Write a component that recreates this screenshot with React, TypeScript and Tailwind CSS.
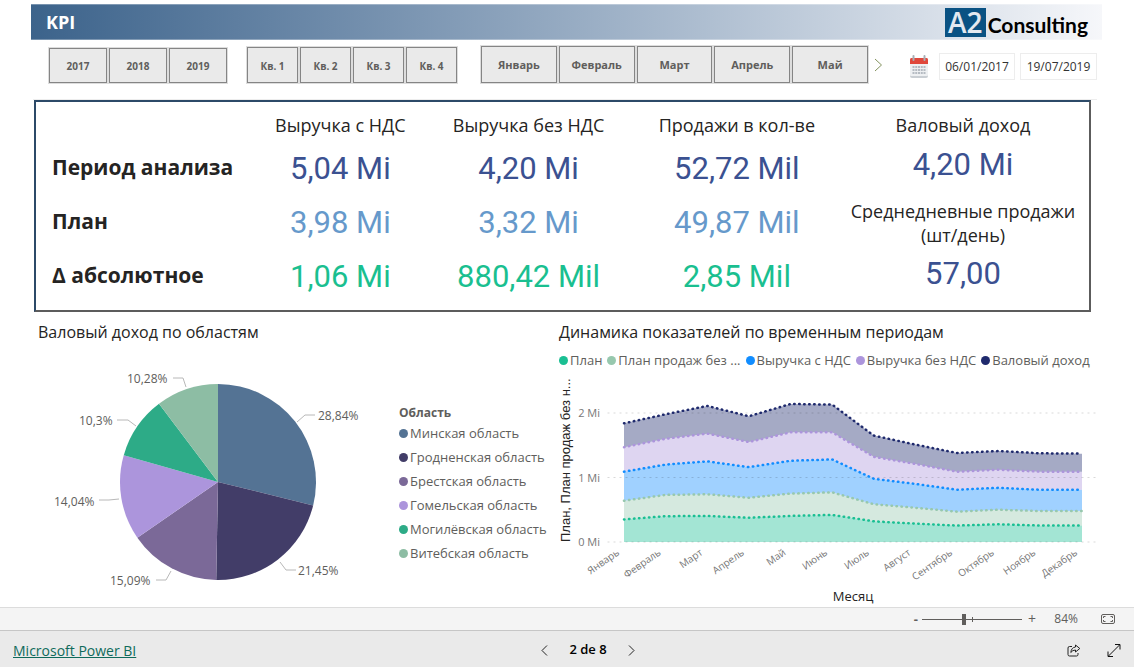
import { useState } from "react";

const years = ['2017', '2018', '2019'];
const quarters = ['Кв. 1', 'Кв. 2', 'Кв. 3', 'Кв. 4'];
const slicerMonths = ['Январь', 'Февраль', 'Март', 'Апрель', 'Май'];

const kpiRows = [
  { label: 'Период анализа', color: 'text-[#3b5191]', values: ['5,04 Mi', '4,20 Mi', '52,72 Mil'] },
  { label: 'План', color: 'text-[#6699cb]', values: ['3,98 Mi', '3,32 Mi', '49,87 Mil'] },
  { label: 'Δ абсолютное', color: 'text-[#1abf90]', values: ['1,06 Mi', '880,42 Mil', '2,85 Mil'] },
];

// line = leader line, x / y = start of the label
const regions = [
  { name: 'Минская область', value: 28.84, label: '28,84%', color: '#547394', line: '259,50 267,43 277,43', x: 280, y: 48 },
  { name: 'Гродненская область', value: 21.45, label: '21,45%', color: '#423d68', line: '242,190 248,198 258,198', x: 260, y: 203 },
  { name: 'Брестская область', value: 15.09, label: '15,09%', color: '#7b6998', line: '133,199 128,208 118,208', x: 72, y: 213 },
  { name: 'Гомельская область', value: 14.04, label: '14,04%', color: '#ac95dc', line: '81,127 71,128 61,128', x: 16, y: 134 },
  { name: 'Могилёвская область', value: 10.3, label: '10,3%', color: '#2dab87', line: '98,54 90,48 79,48', x: 41, y: 53 },
  { name: 'Витебская область', value: 10.28, label: '10,28%', color: '#8dbda4', line: '148,15 145,6 135,6', x: 89, y: 11 },
];

const months = ['Январь', 'Февраль', 'Март', 'Апрель', 'Май', 'Июнь', 'Июль', 'Август', 'Сентябрь', 'Октябрь', 'Ноябрь', 'Декабрь'];

// cumulative values in Mi, from the bottom layer to the top one
const series = [
  { name: 'План', color: '#1abf93', total: [0.35, 0.4, 0.405, 0.375, 0.405, 0.42, 0.32, 0.285, 0.255, 0.275, 0.255, 0.255] },
  { name: 'План продаж без ...', color: '#97c8ae', total: [0.64, 0.73, 0.74, 0.685, 0.75, 0.77, 0.585, 0.53, 0.47, 0.5, 0.48, 0.48] },
  { name: 'Выручка с НДС', color: '#118dff', total: [1.09, 1.2, 1.25, 1.16, 1.26, 1.28, 0.98, 0.9, 0.81, 0.84, 0.81, 0.81] },
  { name: 'Выручка без НДС', color: '#ac95dc', total: [1.47, 1.6, 1.68, 1.55, 1.7, 1.7, 1.32, 1.21, 1.09, 1.12, 1.09, 1.09] },
  { name: 'Валовый доход', color: '#1f2a6d', total: [1.84, 1.98, 2.11, 1.95, 2.14, 2.13, 1.65, 1.51, 1.38, 1.41, 1.375, 1.37] },
];

function Slicer({ items, className, buttonClass }: { items: string[]; className: string; buttonClass: string }) {
  const [active, setActive] = useState('');
  return (
    <div className={`flex gap-[2px] ${className}`}>
      {items.map((item) => (
        <button
          key={item}
          type="button"
          aria-pressed={active === item}
          onClick={() => setActive(item)}
          className={`border border-[#858585] bg-[#eaeaea] font-bold text-[#605e5c] outline outline-[#dddddd] ${buttonClass}`}
        >
          {item}
        </button>
      ))}
    </div>
  );
}

function Logo() {
  return (
    <div className="flex items-center gap-[2px]">
      <div className="flex h-[29px] w-[41px] items-center justify-center bg-[#0a5283] font-['Open_Sans'] text-[28px] leading-none font-semibold text-[#e3e9f0]">A2</div>
      <div className="pt-1 font-['Lato'] text-[21px] leading-none font-bold text-black">Consulting</div>
    </div>
  );
}

function CalendarIcon() {
  return (
    <svg width="20" height="24" viewBox="0 0 20 24" aria-hidden="true">
      <rect x="1" y="3" width="18" height="20" rx="2" fill="#c9ced3" />
      <rect x="1" y="3" width="18" height="18" rx="1" fill="#eef0f2" />
      <path d="M1 9V4.500Q1 3 2.500 3H17.500Q19 3 19 4.500V9Z" fill="#e0483c" />
      <path d="M4.500 1V5M15.500 1V5" stroke="#a9afb5" strokeWidth="2" strokeLinecap="round" />
      <path d="M3.500 12H16.500M3.500 15H16.500M3.500 18H16.500" stroke="#b5bbc2" strokeWidth="2" strokeDasharray="2 0.75" />
    </svg>
  );
}

function Header() {
  return (
    <header className="flex h-9 items-center justify-between border-y border-white/30 bg-linear-to-r from-[#3c638b] to-[#f6f7fa] pr-[14px] pl-[15px]">
      <h1 className="text-[18px] font-bold text-white">KPI</h1>
      <Logo />
    </header>
  );
}

function Filters() {
  return (
    <div className="flex items-center pt-[6px] pr-[5px] pl-[18px]">
      <Slicer items={years} className="mr-[20px] pt-px" buttonClass="h-[35px] w-[58px] pt-[3px] text-[10px]" />
      <Slicer items={quarters} className="mr-[24px]" buttonClass="h-[36px] w-[51px] pt-1 text-[10px]" />
      <Slicer items={slicerMonths} className="mr-[6px] flex-1" buttonClass="h-[37px] flex-1 pt-px text-[11px]" />
      <button type="button" aria-label="Дальше" className="mr-[26px]">
        <svg width="9" height="14" viewBox="0 0 9 14" fill="none" stroke="#84935f">
          <path d="M1 1L7.500 7L1 13" />
        </svg>
      </button>
      <div className="flex items-center pt-1">
        <CalendarIcon />
        <input aria-label="Начало периода" defaultValue="06/01/2017" className="ml-[10px] h-[27px] w-[76px] border border-[#ededed] text-center text-[12px] text-[#333333]" />
        <input aria-label="Конец периода" defaultValue="19/07/2019" className="ml-[5px] h-[27px] w-[77px] border border-[#ededed] text-center text-[12px] text-[#333333]" />
      </div>
    </div>
  );
}

function KpiPanel() {
  return (
    <section className="mr-[11px] ml-[3px] flex border-2 border-[#5c5c5c] border-t-[#2c4a68] border-l-[#2c4a68] px-4 pt-[7px] pb-[6px] text-[#252423]">
      <table className="flex-1 table-fixed">
        <thead>
          <tr className="h-[33px] text-[18px]">
            <td className="w-[24%]"></td>
            <th className="w-[24%] font-normal">Выручка с НДС</th>
            <th className="w-[23%] font-normal">Выручка без НДС</th>
            <th className="w-[29%] font-normal">Продажи в кол-ве</th>
          </tr>
        </thead>
        <tbody>
          {kpiRows.map((row) => (
            <tr key={row.label} className="h-[54px]">
              <th className="pb-[2px] text-left text-[21px] font-bold">{row.label}</th>
              {row.values.map((value) => (
                <td key={value} className={`text-center font-['Roboto'] text-[31px] ${row.color}`}>{value}</td>
              ))}
            </tr>
          ))}
        </tbody>
      </table>

      <div className="flex w-[220px] flex-col items-center text-center">
        <h2 className="text-[18px] leading-[33px]">Валовый доход</h2>
        <p className="font-['Roboto'] text-[31px] leading-[46px] text-[#3b5191]">4,20 Mi</p>
        <h2 className="mt-[11px] text-[18px] leading-[24px]"><span className="whitespace-nowrap">Среднедневные продажи</span> (шт/день)</h2>
        <p className="mt-1 font-['Roboto'] text-[31px] leading-[46px] text-[#3b5191]">57,00</p>
      </div>
    </section>
  );
}

function PieChart() {
  const cx = 180;
  const cy = 110;
  const r = 98;
  const sum = regions.reduce((acc, item) => acc + item.value, 0);
  const point = (share: number) => {
    const angle = share * 2 * Math.PI;
    return `${cx + r * Math.sin(angle)} ${cy - r * Math.cos(angle)}`;
  };
  let start = 0;

  return (
    <svg viewBox="0 -8 355 234" className="min-w-0 flex-1" role="img" aria-label="Валовый доход по областям">
      {regions.map((item) => {
        const end = start + item.value / sum;
        const d = `M${cx} ${cy}L${point(start)}A${r} ${r} 0 0 1 ${point(end)}Z`;
        start = end;
        return (
          <g key={item.name}>
            <path d={d} fill={item.color} />
            <polyline points={item.line} fill="none" stroke="#b8b8b8" />
            <text x={item.x} y={item.y} fontSize="12" fill="#605e5c">{item.label}</text>
          </g>
        );
      })}
    </svg>
  );
}

function AreaChart() {
  const left = 65;
  const step = 458 / 11;
  const base = 165;
  const unit = 64.5;
  const px = (i: number) => left + i * step;
  const py = (v: number) => base - v * unit;
  const line = (values: number[]) => values.map((v, i) => `${px(i)},${py(v)}`);

  return (
    <svg viewBox="0 0 543 228" className="w-full" role="img" aria-label="Динамика показателей по временным периодам">
      {series.map((item, index) => {
        const below = index === 0 ? months.map(() => 0) : series[index - 1].total;
        return (
          <polygon
            key={item.name}
            points={[...line(item.total), ...line(below).reverse()].join(' ')}
            fill={item.color}
            fillOpacity="0.4"
          />
        );
      })}

      {[0, 1, 2].map((v) => (
        <g key={v}>
          <line x1="49" x2="540" y1={py(v)} y2={py(v)} stroke="#000000" strokeOpacity="0.15" strokeDasharray="1 5" strokeLinecap="square" />
          <text x="41" y={py(v) + 4} textAnchor="end" fontSize="11" fill="#777777">{v} Mi</text>
        </g>
      ))}

      {series.map((item) => (
        <polyline
          key={item.name}
          points={line(item.total).join(' ')}
          fill="none"
          stroke={item.color}
          strokeWidth="2.500"
          strokeLinecap="round"
          strokeLinejoin="round"
          strokeDasharray="0.500 4.500"
        />
      ))}

      {months.map((month, i) => (
        <text key={month} transform={`translate(${px(i) - 4} ${base + 12}) rotate(-35)`} textAnchor="end" fontSize="10" fill="#777777">{month}</text>
      ))}

      <text transform="translate(11 165) rotate(-90)" fontSize="13" fill="#252423" fontFamily="Liberation Sans">План, План продаж без н...</text>
      <text x="294" y="224" textAnchor="middle" fontSize="13" fill="#252423">Месяц</text>
    </svg>
  );
}

function Charts() {
  return (
    <div className="grid grid-cols-[521fr_543fr] pl-[7px] pt-[8px]">
      <section>
        <h2 className="text-[16px] leading-6 text-[#252423]">Валовый доход по областям</h2>
        <div className="flex pt-5">
          <PieChart />
          <div className="w-[166px] pt-[41px] pl-[6px] text-[#605e5c]">
            <h3 className="text-[12px] leading-4 font-bold">Область</h3>
            <ul>
              {regions.map((item) => (
                <li key={item.name} className="flex items-center gap-[2px] text-[13px] leading-[24px] whitespace-nowrap">
                  <span className="size-[9px] rounded-full" style={{ backgroundColor: item.color }}></span>
                  {item.name}
                </li>
              ))}
            </ul>
          </div>
        </div>
      </section>

      <section>
        <h2 className="text-[16px] leading-6 text-[#252423]">Динамика показателей по временным периодам</h2>
        <ul className="flex gap-[5px] pt-[3px] pb-1 text-[13px] leading-[26px] whitespace-nowrap text-[#605e5c]">
          {series.map((item) => (
            <li key={item.name} className="flex items-center gap-[2px]">
              <span className="size-[9px] rounded-full" style={{ backgroundColor: item.color }}></span>
              {item.name}
            </li>
          ))}
        </ul>
        <AreaChart />
      </section>
    </div>
  );
}

function ZoomBar() {
  const [zoom, setZoom] = useState(84);
  return (
    <div className="flex h-6 items-center justify-end border-t border-b border-t-[#dcdcdc] border-b-[#c6c6c6] bg-[#f4f4f4] pr-[19px] text-[#605e5c]">
      <button type="button" aria-label="Уменьшить" className="mr-[4px] text-[13px] leading-none font-bold" onClick={() => setZoom(zoom - 10)}>-</button>
      <div className="relative flex w-[100px] items-center">
        <input
          type="range"
          aria-label="Масштаб"
          min="0"
          max="200"
          value={zoom}
          onChange={(e) => setZoom(Number(e.target.value))}
          className="h-[11px] w-full appearance-none bg-[linear-gradient(#605e5c,#605e5c)] bg-[length:100%_1px] bg-center bg-no-repeat [&::-webkit-slider-thumb]:h-[11px] [&::-webkit-slider-thumb]:w-[4px] [&::-webkit-slider-thumb]:appearance-none [&::-webkit-slider-thumb]:bg-[#605e5c]"
        />
        <span className="pointer-events-none absolute left-1/2 h-[5px] w-px bg-[#605e5c]"></span>
      </div>
      <button type="button" aria-label="Увеличить" className="ml-[6px] text-[14px] leading-none" onClick={() => setZoom(zoom + 10)}>+</button>
      <span className="w-[42px] text-right text-[12px]">{zoom}%</span>
      <button type="button" aria-label="По размеру страницы" className="ml-[23px]">
        <svg width="14" height="10" viewBox="0 0 14 10" fill="none" stroke="#605e5c">
          <rect x="0.500" y="0.500" width="13" height="9" rx="1.500" />
          <path d="M2.500 4V2.500H4.500M9.500 2.500H11.500V4M11.500 6V7.500H9.500M4.500 7.500H2.500V6" />
        </svg>
      </button>
    </div>
  );
}

function Footer() {
  return (
    <footer className="grid h-9 grid-cols-3 items-center bg-[#eaeaea] pt-[2px] pr-[13px] pl-[13px] text-black">
      <a href="https://powerbi.microsoft.com" className="justify-self-start text-[14px] text-[#0f6a5b] underline">Microsoft Power BI</a>

      <div className="flex items-center justify-self-center pr-0 pl-[42px] text-[13px] font-semibold">
        <button type="button" aria-label="Предыдущая страница">
          <svg width="7" height="11" viewBox="0 0 7 11" fill="none" stroke="#222222">
            <path d="M6 0.500L1 5.500L6 10.500" />
          </svg>
        </button>
        <span className="px-[21px]">2 de 8</span>
        <button type="button" aria-label="Следующая страница">
          <svg width="7" height="11" viewBox="0 0 7 11" fill="none" stroke="#222222">
            <path d="M1 0.500L6 5.500L1 10.500" />
          </svg>
        </button>
      </div>

      <div className="flex items-center gap-[26px] justify-self-end">
        <button type="button" aria-label="Поделиться">
          <svg width="14" height="13" viewBox="0 0 14 13" fill="none" stroke="#222222">
            <path d="M5 2.500H2.500Q1 2.500 1 4V10.500Q1 12 2.500 12H9.500Q11 12 11 10.500V9" />
            <path d="M8.500 1L12.800 4.500L8.500 8V6Q5.500 6 3.800 8.500Q4.300 3.500 8.500 3Z" strokeLinejoin="round" />
          </svg>
        </button>
        <button type="button" aria-label="Полный экран">
          <svg width="14" height="13" viewBox="0 0 14 13" fill="none" stroke="#111111">
            <path d="M1.500 12L12.500 1M8 0.500H13V5.500M1 7.500V12.500H6" />
          </svg>
        </button>
      </div>
    </footer>
  );
}

export default function App() {
  return (
    <div className="flex min-h-screen flex-col justify-between bg-white font-['Open_Sans','Noto_Sans',sans-serif]">
      <main className="pt-1 pr-8 pl-[31px]">
        <Header />
        <Filters />
        <div className="mt-[16px] mr-[5px] ml-[2px] border-t border-[#ededed]"></div>
        <KpiPanel />
        <Charts />
      </main>
      <div>
        <ZoomBar />
        <Footer />
      </div>
    </div>
  );
}
